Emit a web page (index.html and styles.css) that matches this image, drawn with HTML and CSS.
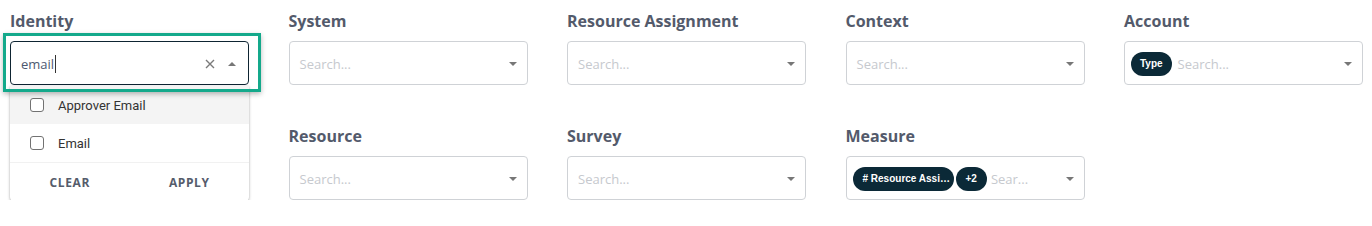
FILE: index.html
```html
<!DOCTYPE html>
<html lang="en">
<head>
<meta charset="utf-8">
<title>Filters</title>
<link rel="stylesheet" href="styles.css">
</head>
<body>
<div class="filters">
  <div class="field">
    <div class="label">Identity</div>
    <div class="select-wrap">
      <div class="select select-focused">
        <span class="value">email</span><span class="cursor"></span>
        <span class="spacer"></span>
        <svg class="icon-clear" width="10" height="10" viewBox="0 0 10 10"><path d="M1 1L9 9M9 1L1 9" stroke="#7a7a7a" stroke-width="1.4" fill="none"/></svg>
        <svg class="icon-caret" width="8" height="4" viewBox="0 0 8 4"><path d="M0 4L4 0L8 4Z" fill="#777"/></svg>
      </div>
      <div class="menu">
        <div class="option option-hover"><span class="checkbox"></span><span>Approver Email</span></div>
        <div class="option"><span class="checkbox"></span><span>Email</span></div>
        <div class="menu-actions"><button class="action">CLEAR</button><button class="action">APPLY</button></div>
      </div>
      <div class="focus-ring"></div>
    </div>
  </div>

  <div class="field">
    <div class="label">System</div>
    <div class="select">
      <span class="placeholder">Search...</span><span class="spacer"></span>
      <svg class="icon-caret" width="8" height="4" viewBox="0 0 8 4"><path d="M0 0L8 0L4 4Z" fill="#777"/></svg>
    </div>
  </div>

  <div class="field">
    <div class="label">Resource Assignment</div>
    <div class="select">
      <span class="placeholder">Search...</span><span class="spacer"></span>
      <svg class="icon-caret" width="8" height="4" viewBox="0 0 8 4"><path d="M0 0L8 0L4 4Z" fill="#777"/></svg>
    </div>
  </div>

  <div class="field">
    <div class="label">Context</div>
    <div class="select">
      <span class="placeholder">Search...</span><span class="spacer"></span>
      <svg class="icon-caret" width="8" height="4" viewBox="0 0 8 4"><path d="M0 0L8 0L4 4Z" fill="#777"/></svg>
    </div>
  </div>

  <div class="field">
    <div class="label">Account</div>
    <div class="select select-chips">
      <span class="chip">Type</span>
      <span class="placeholder placeholder-after">Search...</span><span class="spacer"></span>
      <svg class="icon-caret" width="8" height="4" viewBox="0 0 8 4"><path d="M0 0L8 0L4 4Z" fill="#777"/></svg>
    </div>
  </div>

  <div class="field field-empty"></div>

  <div class="field">
    <div class="label">Resource</div>
    <div class="select">
      <span class="placeholder">Search...</span><span class="spacer"></span>
      <svg class="icon-caret" width="8" height="4" viewBox="0 0 8 4"><path d="M0 0L8 0L4 4Z" fill="#777"/></svg>
    </div>
  </div>

  <div class="field">
    <div class="label">Survey</div>
    <div class="select">
      <span class="placeholder">Search...</span><span class="spacer"></span>
      <svg class="icon-caret" width="8" height="4" viewBox="0 0 8 4"><path d="M0 0L8 0L4 4Z" fill="#777"/></svg>
    </div>
  </div>

  <div class="field">
    <div class="label">Measure</div>
    <div class="select select-chips select-measure">
      <span class="chip chip-wide">#&nbsp;Resource Assi…</span>
      <span class="chip chip-count">+2</span>
      <span class="placeholder placeholder-tight">Sear...</span><span class="spacer"></span>
      <svg class="icon-caret" width="8" height="4" viewBox="0 0 8 4"><path d="M0 0L8 0L4 4Z" fill="#777"/></svg>
    </div>
  </div>
</div>
</body>
</html>
```

FILE: styles.css
```css
html, body {
  margin: 0;
  background: #ffffff;
}
body {
  padding: 10px 0 0 10px;
  font-family: "Open Sans", "Liberation Sans", sans-serif;
}
.filters {
  display: grid;
  grid-template-columns: repeat(5, 239px);
  column-gap: 39.5px;
  row-gap: 40px;
}
.label {
  font-size: 16px;
  font-weight: 700;
  line-height: 22px;
  color: #535a6b;
  margin-bottom: 9px;
  white-space: nowrap;
}
.select-wrap {
  position: relative;
}
.select {
  box-sizing: border-box;
  height: 44px;
  border: 1px solid #cfd2d6;
  border-radius: 4px;
  background: #fff;
  display: flex;
  align-items: center;
  padding: 1px 10px 0 10px;
}
.select-focused {
  border-color: #0e2432;
  padding: 1px 12px 0 10px;
}
.value {
  font-size: 13px;
  color: #4d5870;
  line-height: 18px;
}
.cursor {
  display: inline-block;
  width: 1px;
  height: 18px;
  background: #333;
  margin-left: 1px;
}
.spacer {
  flex: 1;
}
.icon-clear {
  margin-right: 13px;
  display: block;
}
.icon-caret {
  display: block;
}
.placeholder {
  font-size: 13px;
  color: #c6c9ce;
  white-space: nowrap;
}
.placeholder-after {
  margin-left: 6px;
}
.placeholder-tight {
  margin-left: 4px;
}
.select-chips {
  padding-left: 6px;
}
.chip {
  display: inline-flex;
  align-items: center;
  height: 24px;
  border-radius: 12px;
  background: #0b2937;
  color: #ffffff;
  font-family: "Liberation Sans", Arial, sans-serif;
  font-weight: 700;
  font-size: 10px;
  padding: 0 9px;
  white-space: nowrap;
}
.chip-wide {
  box-sizing: border-box;
  width: 101px;
  padding: 0 8px 0 10px;
  overflow: hidden;
}
.chip-count {
  margin-left: 2px;
  padding: 0 10px;
}
.menu {
  position: absolute;
  top: calc(100% + 1px);
  left: 0;
  width: 239px;
  background: #fff;
  border-radius: 0 0 4px 4px;
  box-shadow: 0 1px 3px rgba(0, 0, 0, 0.32), 0 0 1px rgba(0, 0, 0, 0.14);
  z-index: 5;
  font-family: Roboto, "Noto Sans", sans-serif;
}
.option {
  height: 38px;
  display: flex;
  align-items: center;
  padding-left: 20px;
  font-size: 13px;
  color: #333;
}
.option-hover {
  background: #f4f4f4;
}
.checkbox {
  box-sizing: border-box;
  width: 14px;
  height: 14px;
  border: 1.5px solid #727272;
  border-radius: 3px;
  margin-right: 14px;
  background: #fff;
}
.menu-actions {
  display: flex;
  height: 39px;
  border-top: 1px solid #f1f1f1;
  box-sizing: border-box;
}
.action {
  flex: 1;
  border: 0;
  background: transparent;
  font-family: "Open Sans", sans-serif;
  font-weight: 700;
  font-size: 12px;
  letter-spacing: 0.6px;
  color: #555c6b;
  padding: 0;
}
.focus-ring {
  position: absolute;
  top: -8px;
  left: -7px;
  right: -12px;
  bottom: -7px;
  border: 3px solid #14a98b;
  box-sizing: border-box;
  box-shadow: 0 2px 5px rgba(0, 0, 0, 0.28);
  z-index: 6;
  pointer-events: none;
}
```
